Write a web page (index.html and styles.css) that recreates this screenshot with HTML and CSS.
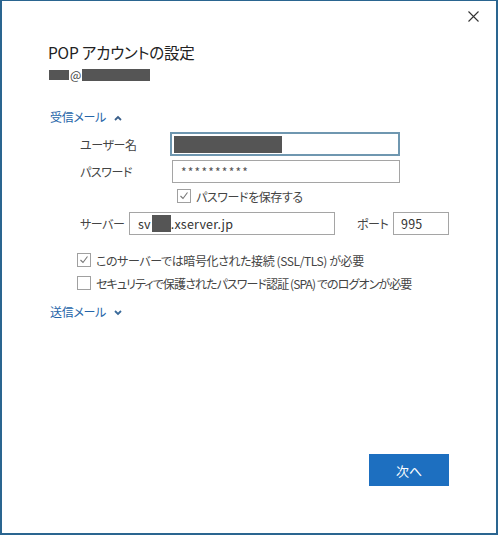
FILE: index.html
```html
<!DOCTYPE html>
<html lang="ja">
<head>
<meta charset="utf-8">
<title>POP アカウントの設定</title>
<link rel="stylesheet" href="styles.css">
</head>
<body>
<div class="window">
  <div class="titlebar">
    <button class="close" aria-label="閉じる">
      <svg width="11" height="11" viewBox="0 0 11 11"><path d="M0.5 0.5 L10.5 10.5 M10.5 0.5 L0.5 10.5" stroke="#333" stroke-width="1.1" fill="none"/></svg>
    </button>
  </div>
  <div class="content">
    <h1 class="title">POP アカウントの設定</h1>
    <div class="account"><span class="redact r1"></span><span class="at">@</span><span class="redact r2"></span></div>

    <div class="toggle open">受信メール
      <svg width="8" height="6" viewBox="0 0 8 6"><path d="M1 5 L4 2 L7 5" stroke="#3a5f8a" stroke-width="1.8" fill="none"/></svg>
    </div>

    <div class="form">
      <div class="row">
        <label class="lbl">ユーザー名</label>
        <div class="input focus"><span class="redact r3"></span></div>
      </div>
      <div class="row pw">
        <label class="lbl">パスワード</label>
        <div class="input stars">**********</div>
      </div>
      <div class="check save"><span class="box"><svg width="10" height="10" viewBox="0 0 10 10"><path d="M1.5 5 L4 7.5 L8.5 1.5" stroke="#777" stroke-width="1.1" fill="none"/></svg></span>パスワードを保存する</div>
      <div class="row server">
        <label class="lbl short">サーバー</label>
        <div class="input srv">sv<span class="redact r4"></span>.xserver.jp</div>
        <label class="lbl port">ポート</label>
        <div class="input prt">995</div>
      </div>
      <div class="check ssl"><span class="box"><svg width="10" height="10" viewBox="0 0 10 10"><path d="M1.5 5 L4 7.5 L8.5 1.5" stroke="#777" stroke-width="1.1" fill="none"/></svg></span>このサーバーでは暗号化された接続 (SSL/TLS) が必要</div>
      <div class="check spa"><span class="box"></span>セキュリティで保護されたパスワード認証 (SPA) でのログオンが必要</div>
    </div>

    <div class="toggle closed">送信メール
      <svg width="8" height="6" viewBox="0 0 8 6"><path d="M1 1 L4 4 L7 1" stroke="#3a6a9a" stroke-width="1.8" fill="none"/></svg>
    </div>
  </div>
  <div class="footer">
    <button class="primary">次へ</button>
  </div>
</div>
</body>
</html>
```

FILE: styles.css
```css
html, body {
  margin: 0;
  padding: 0;
  background: #fff;
}
body {
  font-family: "Noto Sans CJK JP", "Noto Sans", sans-serif;
  font-feature-settings: "palt";
  color: #333;
}
.window {
  box-sizing: border-box;
  width: 498px;
  height: 535px;
  border: 2px solid #2a6590;
  border-top-width: 1px;
  display: flex;
  flex-direction: column;
  background: #fff;
}
.titlebar {
  height: 40px;
  display: flex;
  justify-content: flex-end;
  align-items: flex-start;
}
.close {
  border: 0;
  background: none;
  padding: 0;
  margin: 10px 17px 0 0;
  width: 11px;
  height: 11px;
  display: flex;
}
.content {
  padding-left: 46px;
  flex: 1;
}
.title {
  margin: 0;
  font-weight: normal;
  font-size: 15.5px;
  line-height: 22px;
  color: #222;
  letter-spacing: -0.2px;
}
.account {
  margin-top: 4px;
  height: 16px;
  display: flex;
  align-items: center;
}
.redact {
  display: inline-block;
  background: #555;
}
.r1 { width: 20px; height: 10px; margin-left: 1px; }
.at { font-size: 12px; color: #444; margin: 0 1px; line-height: 16px; }
.r2 { width: 68px; height: 12px; }
.toggle {
  margin-top: 25px;
  height: 18px;
  line-height: 18px;
  font-size: 12px;
  letter-spacing: -0.3px;
  color: #2564a8;
  display: flex;
  align-items: center;
  gap: 8px;
  padding-left: 2px;
  white-space: nowrap;
}
.toggle svg { margin-top: 1px; }
.form {
  margin-top: 6px;
  padding-left: 32px;
  font-size: 12px;
  letter-spacing: -0.4px;
  color: #444;
  white-space: nowrap;
}
.row {
  display: flex;
  align-items: center;
  height: 24px;
  margin-bottom: 4px;
}
.row.pw { height: 23px; margin-bottom: 5px; }
.lbl { width: 92px; flex: none; }
.lbl.short { width: 49px; }
.lbl.port { width: 30px; margin-left: 22px; margin-right: 6px; }
.input {
  box-sizing: border-box;
  height: 23px;
  width: 228px;
  border: 1px solid #a5a5a5;
  padding: 0 8px;
  display: flex;
  align-items: center;
  font-size: 12.5px;
  color: #333;
  letter-spacing: 0.2px;
  flex: none;
}
.input.stars { letter-spacing: 1.2px; color: #555; font-size: 12px; }
.input.focus {
  height: 24px;
  width: 230px;
  margin-left: -2px;
  border: 2px solid #6f97b0;
  box-shadow: inset 0 0 0 1px #fff;
  padding: 0 2px;
}
.r3 { width: 108px; height: 17px; }
.input.srv { width: 206px; }
.input.prt { width: 56px; padding-left: 7px; }
.r4 { width: 19px; height: 17px; margin: 0 0 0 1px; }
.row.server { height: 23px; margin-bottom: 17px; margin-left: 0; }
.check {
  display: flex;
  align-items: center;
  height: 16px;
  gap: 5px;
}
.check.save { margin-left: 97px; margin-bottom: 8px; }
.check.ssl { margin-left: -3px; margin-bottom: 7px; }
.check.spa { margin-left: -3px; letter-spacing: -0.9px; }
.box {
  box-sizing: border-box;
  width: 14px;
  height: 14px;
  border: 1px solid #a0a0a0;
  display: flex;
  align-items: center;
  justify-content: center;
  flex: none;
}
.toggle.closed { margin-top: 12px; }
.footer {
  display: flex;
  justify-content: flex-end;
  padding: 0 47px 47px 0;
}
.primary {
  width: 80px;
  height: 32px;
  border: 0;
  background: #1d6fc0;
  color: #fff;
  font-family: "Noto Sans CJK JP", sans-serif;
  font-size: 13px;
  padding: 0;
}
```
